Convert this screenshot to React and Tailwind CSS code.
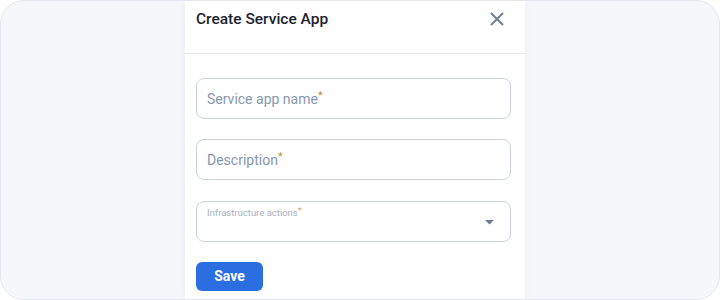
export default function App() {
  return (
    <div className="h-[300px] w-[720px] overflow-hidden bg-white font-['Roboto',sans-serif]">
      <div className="flex h-[300px] w-[720px] overflow-hidden rounded-[24px] border border-[#e3e6ee] bg-[#f6f7fb]">
        <div className="ml-[184px] flex h-full w-[340px] flex-col bg-white shadow-[0_0_6px_rgba(30,40,80,0.06)]">
          <header className="flex h-[53px] items-start justify-between border-b border-[#e8ebf2] pl-[11px] pr-[21px] pt-[7px]">
            <h1 className="text-[15.5px] font-medium leading-[22px] text-[#1c2330]">Create Service App</h1>
            <svg width="14" height="14" viewBox="0 0 14 14" className="mt-[4px]">
              <path d="M1.5 1.5 L12.5 12.5 M12.5 1.5 L1.5 12.5" stroke="#6f7f95" strokeWidth="2" strokeLinecap="round" />
            </svg>
          </header>

          <div className="flex w-[326px] flex-col gap-[20px] pl-[11px] pt-[24px]">
            <div className="flex h-[41px] items-center rounded-[8px] border border-[#c9d2de] px-[10px] pt-[2px]">
              <span className="text-[14px] text-[#8797ac]">
                Service app name<span className="relative top-[-5px] text-[11px] text-[#bf8a32]">*</span>
              </span>
            </div>
            <div className="flex h-[41px] items-center rounded-[8px] border border-[#c9d2de] px-[10px] pt-[2px]">
              <span className="text-[14px] text-[#8797ac]">
                Description<span className="relative top-[-5px] text-[11px] text-[#bf8a32]">*</span>
              </span>
            </div>
            <div className="mt-px flex h-[41px] items-start justify-between rounded-[8px] border border-[#c9d2de] pl-[10px] pr-[16px] pt-[4px]">
              <span className="text-[9.5px] leading-[14px] text-[#a7b2c1]">
                Infrastructure actions<span className="relative top-[-2px] text-[#dcaa6a]">*</span>
              </span>
              <svg width="9" height="5" viewBox="0 0 9 5" className="mt-[14px]">
                <path d="M0 0 H9 L4.5 4.5 Z" fill="#6e7d92" />
              </svg>
            </div>
            <button className="h-[29px] w-[67px] rounded-[6px] bg-[#2a6ee2] text-[14px] font-bold text-white">
              Save
            </button>
          </div>
        </div>
      </div>
    </div>
  );
}
